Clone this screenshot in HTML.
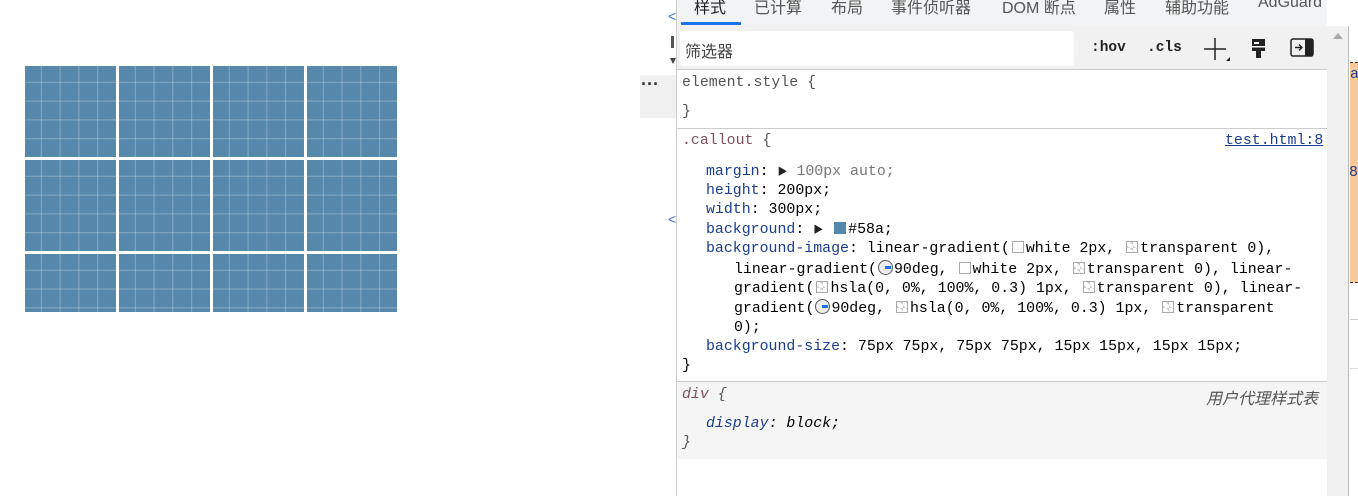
<!DOCTYPE html>
<html><head><meta charset="utf-8"><style>
*{margin:0;padding:0;box-sizing:border-box}
body{width:1358px;height:496px;overflow:hidden;background:#fff;position:relative;font-family:"Liberation Sans","Noto Sans CJK SC",sans-serif}
.abs{position:absolute}
.grid{left:25px;top:66px;width:372px;height:246px;background-color:#58a;
background-image:linear-gradient(#fff 3px,transparent 0),linear-gradient(90deg,#fff 3px,transparent 0),linear-gradient(hsla(0,0%,100%,.3) 1px,transparent 0),linear-gradient(90deg,hsla(0,0%,100%,.3) 1px,transparent 0);
background-size:94px 94px,94px 94px,18.8px 18.8px,18.8px 18.8px;background-position:-3px -3px}
.mono{font-family:"Liberation Mono","Noto Sans CJK SC",monospace;font-size:14.9px;white-space:pre;line-height:19px}
.p{color:#1a3d8f}.v{color:#222}.g{color:#777}.sel{color:#7a5060}
.sw{display:inline-block;width:12px;height:12px;border:1px solid #aaa;vertical-align:-1px;margin:0 2px 0 2px;background:#fff}
.ck{background:linear-gradient(45deg,#ccc 25%,transparent 25%,transparent 75%,#ccc 75%),#fff;background-size:6px 6px}
.ang{display:inline-block;width:15px;height:15px;border:1.5px solid #555;border-radius:50%;vertical-align:-2px;margin:0 1px;position:relative;background:#eee}
.ang:after{content:"";position:absolute;left:6px;top:5px;width:6px;height:3px;background:#1a73e8}
.tri{font-size:10px;color:#222}
.tab{top:-6px;font-size:16px;color:#555}
</style></head><body>
<div class="abs grid"></div>

<div class="abs" style="left:640px;top:75px;width:36px;height:43px;background:#f0f0f0"></div>
<div class="abs" style="left:641px;top:74px;font-size:18px;font-weight:bold;color:#333;letter-spacing:0px">···</div>
<div class="abs" style="left:668px;top:8px;color:#3a6fd0;font-size:14px">&lt;</div>
<div class="abs" style="left:668px;top:211px;color:#3a6fd0;font-size:14px">&lt;</div>
<div class="abs" style="left:671px;top:36px;width:3px;height:12px;background:#555"></div>
<div class="abs" style="left:670px;top:58px;width:0;height:0;border-left:3px solid transparent;border-right:3px solid transparent;border-top:6px solid #444"></div>

<div class="abs" style="left:676px;top:0;width:1px;height:496px;background:#ccc"></div>
<div class="abs" style="left:677px;top:0;width:650px;height:26px;background:#f1f3f4"></div>
<div class="abs tab" style="left:694px;color:#222">样式</div>
<div class="abs" style="left:681px;top:22px;width:60px;height:3px;background:#1a73e8"></div>
<div class="abs tab" style="left:754px">已计算</div>
<div class="abs tab" style="left:831px">布局</div>
<div class="abs tab" style="left:891px">事件侦听器</div>
<div class="abs tab" style="left:1002px">DOM 断点</div>
<div class="abs tab" style="left:1104px">属性</div>
<div class="abs tab" style="left:1165px">辅助功能</div>
<div class="abs tab" style="left:1258px">AdGuard</div>

<div class="abs" style="left:677px;top:26px;width:650px;height:44px;background:#f1f1f1;border-bottom:1px solid #ccc"></div>
<div class="abs" style="left:680px;top:31px;width:394px;height:35px;background:#fff;border-radius:3px"></div>
<div class="abs" style="left:685px;top:38px;font-size:16px;color:#444">筛选器</div>
<div class="abs" style="left:1091px;top:40px;font-family:'Liberation Mono',monospace;font-size:14.5px;font-weight:bold;color:#222">:hov</div>
<div class="abs" style="left:1147px;top:40px;font-family:'Liberation Mono',monospace;font-size:14.5px;font-weight:bold;color:#222">.cls</div>
<svg class="abs" style="left:1202px;top:36px" width="28" height="28"><path d="M13 2V24M2 13H24" stroke="#222" stroke-width="1.5"/><path d="M24 25L28 25L28 21Z" fill="#222"/></svg>
<svg class="abs" style="left:1249px;top:38px" width="20" height="22"><path d="M3 1H16V13H3Z" fill="#222"/><path d="M5 4H10V6H5Z" fill="#fff"/><path d="M3 8H16V9.5H3Z" fill="#fff"/><path d="M7 13H12V20H7Z" fill="#222"/></svg>
<svg class="abs" style="left:1290px;top:38px" width="24" height="20"><rect x="1" y="1" width="22" height="17" rx="2" fill="none" stroke="#222" stroke-width="1.5"/><rect x="15" y="1" width="8" height="17" fill="#222"/><path d="M5 9.5H12M9 6.5L12 9.5L9 12.5" stroke="#222" stroke-width="1.4" fill="none"/></svg>

<div class="abs" style="left:1327px;top:26px;width:21px;height:470px;background:#f1f1f1"></div>
<div class="abs" style="left:1333px;top:33px;width:0;height:0;border-left:5px solid transparent;border-right:5px solid transparent;border-bottom:6px solid #aaa"></div>
<div class="abs" style="left:1348px;top:26px;width:1px;height:470px;background:#bbb"></div>
<div class="abs" style="left:1350px;top:62px;width:8px;height:221px;background:#f7c998;border-top:1px dashed #333;border-bottom:1px dashed #333"></div>
<div class="abs mono" style="left:1350px;top:66px;color:#1a3d8f">a</div>
<div class="abs mono" style="left:1349px;top:164px;color:#1a3d8f">8</div>
<div class="abs" style="left:1350px;top:319px;width:8px;height:1px;background:#ccc"></div>
<div class="abs" style="left:1350px;top:368px;width:8px;height:1px;background:#ddd"></div>

<div class="abs mono g" style="left:682px;top:74px;color:#555">element.style {</div>
<div class="abs mono" style="left:682px;top:103px;color:#555">}</div>
<div class="abs" style="left:677px;top:128px;width:650px;height:1px;background:#ccc"></div>
<div class="abs mono sel" style="left:682px;top:132px">.callout <span style="color:#555">{</span></div>
<div class="abs mono" style="left:1225px;top:132px;color:#1a3d8f;text-decoration:underline">test.html:8</div>
<div class="abs mono" style="left:706px;top:163px"><span class="p">margin</span>: <span class="tri">▶</span> <span class="g">100px auto;</span></div>
<div class="abs mono" style="left:706px;top:182px"><span class="p">height</span>: 200px;</div>
<div class="abs mono" style="left:706px;top:201px"><span class="p">width</span>: 300px;</div>
<div class="abs mono" style="left:706px;top:221px"><span class="p">background</span>: <span class="tri">▶</span> <span class="sw" style="background:#58a;border-color:#58a"></span>#58a;</div>
<div class="abs mono" style="left:706px;top:240px"><span class="p">background-image</span>: linear-gradient(<span class="sw"></span>white 2px, <span class="sw ck"></span>transparent 0),</div>
<div class="abs mono" style="left:734px;top:260px">linear-gradient(<span class="ang"></span>90deg, <span class="sw"></span>white 2px, <span class="sw ck"></span>transparent 0), linear-</div>
<div class="abs mono" style="left:734px;top:280px">gradient(<span class="sw ck"></span>hsla(0, 0%, 100%, 0.3) 1px, <span class="sw ck"></span>transparent 0), linear-</div>
<div class="abs mono" style="left:734px;top:299px">gradient(<span class="ang"></span>90deg, <span class="sw ck"></span>hsla(0, 0%, 100%, 0.3) 1px, <span class="sw ck"></span>transparent</div>
<div class="abs mono" style="left:734px;top:319px">0);</div>
<div class="abs mono" style="left:706px;top:338px"><span class="p">background-size</span>: 75px 75px, 75px 75px, 15px 15px, 15px 15px;</div>
<div class="abs mono" style="left:682px;top:357px">}</div>
<div class="abs" style="left:677px;top:381px;width:650px;height:78px;background:#f5f5f5;border-top:1px solid #ccc"></div>
<div class="abs mono sel" style="left:682px;top:386px;font-style:italic">div <span style="color:#555">{</span></div>
<div class="abs" style="left:1206px;top:385px;font-size:16px;font-style:italic;color:#555">用户代理样式表</div>
<div class="abs mono" style="left:706px;top:415px;font-style:italic"><span class="p">display</span>: block;</div>
<div class="abs mono" style="left:682px;top:434px;font-style:italic;color:#555">}</div>
</body></html>
